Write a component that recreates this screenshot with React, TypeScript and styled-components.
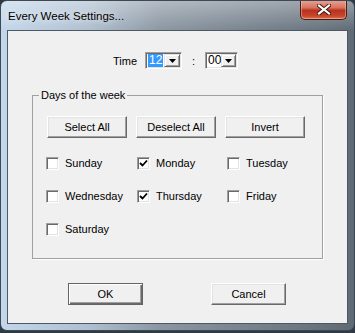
import styled, { createGlobalStyle } from 'styled-components';

const GlobalStyle = createGlobalStyle`
  html, body {
    margin: 0;
    padding: 0;
    background: #2f3a44;
  }
  body {
    font-family: "Liberation Sans", Arial, sans-serif;
    font-size: 11px;
    color: #000;
  }
`;

const days = [
  { name: 'Sunday', checked: false },
  { name: 'Monday', checked: true },
  { name: 'Tuesday', checked: false },
  { name: 'Wednesday', checked: false },
  { name: 'Thursday', checked: true },
  { name: 'Friday', checked: false },
  { name: 'Saturday', checked: false },
];

function ArrowIcon() {
  return (
    <svg width="7" height="4" viewBox="0 0 7 4">
      <path d="M0 0H7L3.5 4Z" fill="#000" />
    </svg>
  );
}

function CheckIcon() {
  return (
    <svg width="9" height="9" viewBox="0 0 9 9">
      <path d="M1 4L3.5 6.5L8 1.5" stroke="#000" strokeWidth="1.8" fill="none" />
    </svg>
  );
}

function CloseIcon() {
  return (
    <svg width="14" height="11" viewBox="0 0 14 11">
      <path d="M2 1.5L12 9.5M12 1.5L2 9.5" stroke="#3a1510" strokeWidth="4" strokeLinecap="square" />
      <path d="M2 1.5L12 9.5M12 1.5L2 9.5" stroke="#fff" strokeWidth="2.2" strokeLinecap="square" />
    </svg>
  );
}

export default function App() {
  return (
    <>
      <GlobalStyle />
      <Window>
        <TitleBar>
          <Title>Every Week Settings...</Title>
          <CloseButton>
            <CloseIcon />
          </CloseButton>
        </TitleBar>
        <Client>
          <TimeRow>
            <TimeLabel>Time</TimeLabel>
            <Combo $width={37}>
              <ComboField>
                <Selected>12</Selected>
              </ComboField>
              <DropButton>
                <ArrowIcon />
              </DropButton>
            </Combo>
            <Colon>:</Colon>
            <Combo $width={33}>
              <ComboField>00</ComboField>
              <DropButton>
                <ArrowIcon />
              </DropButton>
            </Combo>
          </TimeRow>

          <GroupBox>
            <Legend>Days of the week</Legend>
            <ButtonRow>
              <Button>Select All</Button>
              <Button>Deselect All</Button>
              <Button>Invert</Button>
            </ButtonRow>
            <DayGrid>
              {days.map((day) => (
                <Day key={day.name}>
                  <CheckBox>{day.checked && <CheckIcon />}</CheckBox>
                  <span>{day.name}</span>
                </Day>
              ))}
            </DayGrid>
          </GroupBox>

          <FooterRow>
            <DialogButton $default>OK</DialogButton>
            <DialogButton>Cancel</DialogButton>
          </FooterRow>
        </Client>
      </Window>
    </>
  );
}

const Window = styled.div`
  width: 355px;
  height: 331px;
  box-sizing: border-box;
  border-radius: 7px;
  border: 1px solid #3c4853;
  background:
    linear-gradient(180deg, rgba(255, 255, 255, 0.35) 0px, rgba(255, 255, 255, 0) 30px),
    linear-gradient(90deg, #c3d6ea 0%, #aebfcf 25%, #8a96a2 45%, #7b8692 65%, #6c7782 85%, #5f6a74 100%);
  display: flex;
  flex-direction: column;
  overflow: hidden;
`;

const TitleBar = styled.div`
  height: 29px;
  display: flex;
  align-items: flex-start;
`;

const Title = styled.div`
  font-size: 11.5px;
  margin: 9px 0 0 7px;
  color: #000;
  text-shadow: 0 0 6px rgba(255, 255, 255, 0.9);
`;

const CloseButton = styled.div`
  margin-left: auto;
  margin-right: 7px;
  margin-top: -1px;
  width: 47px;
  height: 20px;
  box-sizing: border-box;
  border: 1px solid #4a1c16;
  border-top: none;
  border-radius: 0 0 5px 5px;
  background: linear-gradient(180deg, #e9a597 0%, #d8735f 40%, #b8321d 55%, #c8472c 85%, #dd7a55 100%);
  box-shadow: inset 0 0 0 1px rgba(255, 200, 190, 0.45);
  display: flex;
  align-items: center;
  justify-content: center;
`;

const Client = styled.div`
  margin-left: 6px;
  width: 341px;
  height: 294px;
  box-sizing: border-box;
  border: 1px solid #4f5963;
  background: #f0f0f0;
  display: flex;
  flex-direction: column;
`;

const TimeRow = styled.div`
  display: flex;
  align-items: center;
  height: 17px;
  margin-top: 21px;
  padding-left: 105px;
`;

const TimeLabel = styled.span`
  width: 32px;
`;

const Combo = styled.div<{ $width: number }>`
  width: ${(p) => p.$width}px;
  height: 17px;
  box-sizing: border-box;
  border: 1px solid;
  border-color: #a0a0a0 #fff #fff #a0a0a0;
  box-shadow: inset 1px 1px 0 #696969, inset -1px -1px 0 #e3e3e3;
  background: #fff;
  display: flex;
  padding: 1px 1px 1px 2px;
`;

const ComboField = styled.div`
  flex: 1;
  display: flex;
  align-items: center;
  font-size: 12px;
  line-height: 13px;
`;

const Selected = styled.span`
  background: #3399ff;
  color: #fff;
  padding: 0 1px;
  line-height: 13px;
`;

const DropButton = styled.div`
  width: 16px;
  height: 13px;
  box-sizing: border-box;
  border: 1px solid;
  border-color: #e3e3e3 #696969 #696969 #e3e3e3;
  box-shadow: inset 1px 1px 0 #fff, inset -1px -1px 0 #a0a0a0;
  background: #f0f0f0;
  display: flex;
  align-items: center;
  justify-content: center;
`;

const Colon = styled.span`
  width: 23px;
  padding-left: 10px;
  box-sizing: border-box;
`;

const GroupBox = styled.fieldset`
  margin: 20px 0 0 24px;
  padding: 0 0 22px 0;
  width: 291px;
  box-sizing: border-box;
  border: 1px solid #a0a0a0;
  box-shadow: 1px 1px 0 #fff;
  min-inline-size: 0;
`;

const Legend = styled.legend`
  margin-left: 6px;
  padding: 0 2px;
  line-height: 13px;
`;

const ButtonRow = styled.div`
  display: flex;
  gap: 9px;
  padding: 14px 0 0 14px;
`;

const Button = styled.button`
  width: 80px;
  height: 22px;
  padding: 0;
  font: inherit;
  color: #000;
  background: #f0f0f0;
  border: 1px solid;
  border-color: #fff #696969 #696969 #fff;
  box-shadow: inset -1px -1px 0 #a0a0a0, inset 1px 1px 0 #e3e3e3;
  display: flex;
  align-items: center;
  justify-content: center;
`;

const DayGrid = styled.div`
  display: grid;
  grid-template-columns: 91px 90px 90px;
  row-gap: 20px;
  margin-top: 19px;
  padding-left: 13px;
`;

const Day = styled.label`
  display: flex;
  align-items: center;
  gap: 6px;
  height: 13px;
  line-height: 13px;
  white-space: nowrap;
`;

const CheckBox = styled.span`
  width: 13px;
  height: 13px;
  box-sizing: border-box;
  border: 1px solid;
  border-color: #a0a0a0 #fff #fff #a0a0a0;
  box-shadow: inset 1px 1px 0 #696969, inset -1px -1px 0 #e3e3e3;
  background: #fff;
  display: flex;
  align-items: center;
  justify-content: center;
  flex-shrink: 0;
`;

const FooterRow = styled.div`
  display: flex;
  gap: 68px;
  margin-top: 24px;
  padding-left: 60px;
`;

const DialogButton = styled.button<{ $default?: boolean }>`
  width: 75px;
  height: 22px;
  padding: 0;
  font: inherit;
  color: #000;
  background: #f0f0f0;
  display: flex;
  align-items: center;
  justify-content: center;
  border: 1px solid;
  ${(p) =>
    p.$default
      ? `
    border-color: #646464;
    box-shadow: inset 1px 1px 0 #fff, inset -1px -1px 0 #696969, inset -2px -2px 0 #a0a0a0;
  `
      : `
    border-color: #fff #696969 #696969 #fff;
    box-shadow: inset -1px -1px 0 #a0a0a0, inset 1px 1px 0 #e3e3e3;
  `}
`;
